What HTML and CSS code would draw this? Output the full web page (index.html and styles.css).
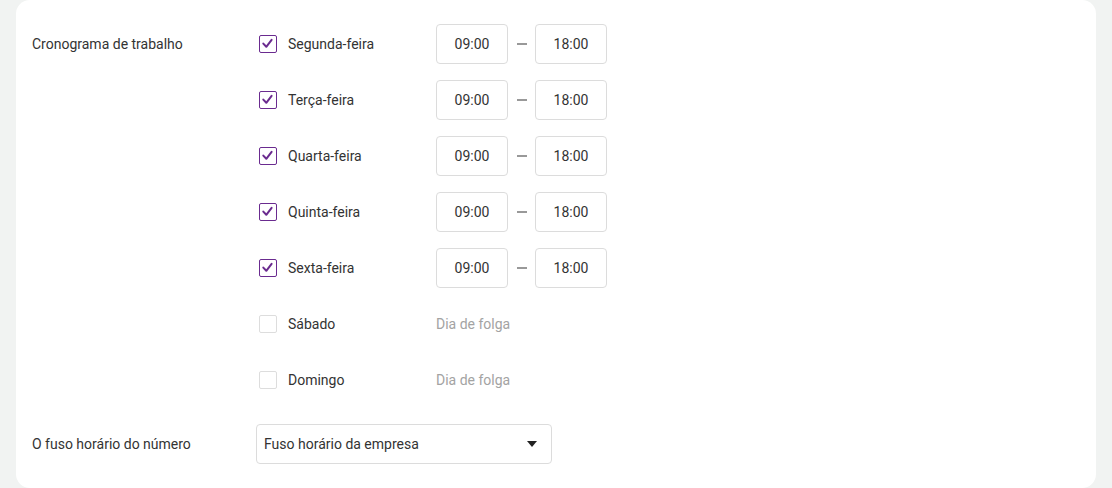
FILE: index.html
```html
<!DOCTYPE html>
<html lang="pt">
<head>
<meta charset="utf-8">
<link rel="stylesheet" href="styles.css">
</head>
<body>
<div class="card">
  <div class="field">
    <div class="field-label">Cronograma de trabalho</div>
    <div class="schedule">
      <div class="day">
        <span class="check on"><svg viewBox="0 0 15 15"><path d="M3.3 7.6l3 3.2 5.3-7"/></svg></span>
        <span class="day-name">Segunda-feira</span>
        <div class="times"><span class="time">09:00</span><span class="dash"></span><span class="time">18:00</span></div>
      </div>
      <div class="day">
        <span class="check on"><svg viewBox="0 0 15 15"><path d="M3.3 7.6l3 3.2 5.3-7"/></svg></span>
        <span class="day-name">Terça-feira</span>
        <div class="times"><span class="time">09:00</span><span class="dash"></span><span class="time">18:00</span></div>
      </div>
      <div class="day">
        <span class="check on"><svg viewBox="0 0 15 15"><path d="M3.3 7.6l3 3.2 5.3-7"/></svg></span>
        <span class="day-name">Quarta-feira</span>
        <div class="times"><span class="time">09:00</span><span class="dash"></span><span class="time">18:00</span></div>
      </div>
      <div class="day">
        <span class="check on"><svg viewBox="0 0 15 15"><path d="M3.3 7.6l3 3.2 5.3-7"/></svg></span>
        <span class="day-name">Quinta-feira</span>
        <div class="times"><span class="time">09:00</span><span class="dash"></span><span class="time">18:00</span></div>
      </div>
      <div class="day">
        <span class="check on"><svg viewBox="0 0 15 15"><path d="M3.3 7.6l3 3.2 5.3-7"/></svg></span>
        <span class="day-name">Sexta-feira</span>
        <div class="times"><span class="time">09:00</span><span class="dash"></span><span class="time">18:00</span></div>
      </div>
      <div class="day">
        <span class="check"></span>
        <span class="day-name">Sábado</span>
        <span class="off">Dia de folga</span>
      </div>
      <div class="day">
        <span class="check"></span>
        <span class="day-name">Domingo</span>
        <span class="off">Dia de folga</span>
      </div>
    </div>
  </div>
  <div class="field tz">
    <div class="field-label">O fuso horário do número</div>
    <div class="select">
      <span>Fuso horário da empresa</span>
      <span class="caret"></span>
    </div>
  </div>
</div>
</body>
</html>
```

FILE: styles.css
```css
html, body {
  margin: 0;
  padding: 0;
}
body {
  background: #f1f3f2;
  font-family: Roboto, "Liberation Sans", sans-serif;
  font-size: 14px;
  color: #333;
  padding: 0 16px;
}
.card {
  background: #fff;
  border-radius: 14px;
  padding: 24px 16px 24px 16px;
  height: 488px;
  box-sizing: border-box;
}
.field {
  display: flex;
  align-items: flex-start;
}
.field-label {
  width: 224px;
  line-height: 40px;
  flex-shrink: 0;
}
.schedule {
  display: flex;
  flex-direction: column;
  gap: 16px;
}
.day {
  display: flex;
  align-items: center;
  height: 40px;
}
.check {
  width: 18px;
  height: 18px;
  box-sizing: border-box;
  border: 1px solid #ddd;
  border-radius: 2px;
  margin-left: 3px;
  display: flex;
}
.check.on {
  border: 1.5px solid #6a2b8f;
}
.check svg {
  width: 15px;
  height: 15px;
  fill: none;
  stroke: #6a2b8f;
  stroke-width: 2;
  stroke-linecap: round;
  stroke-linejoin: round;
}
.day-name {
  margin-left: 11px;
  width: 148px;
}
.times {
  display: flex;
  align-items: center;
}
.time {
  width: 72px;
  height: 40px;
  box-sizing: border-box;
  border: 1px solid #dcdcdc;
  border-radius: 4px;
  display: flex;
  align-items: center;
  justify-content: center;
}
.dash {
  width: 10px;
  height: 1.5px;
  background: #999;
  margin: 0 8px 0 9px;
}
.off {
  color: #a3a3a3;
}
.tz {
  margin-top: 24px;
}
.select {
  width: 296px;
  height: 40px;
  box-sizing: border-box;
  border: 1px solid #dcdcdc;
  border-radius: 4px;
  display: flex;
  align-items: center;
  justify-content: space-between;
  padding: 0 14px 0 7px;
}
.caret {
  width: 0;
  height: 0;
  border-left: 5.5px solid transparent;
  border-right: 5.5px solid transparent;
  border-top: 6px solid #222;
}
```
